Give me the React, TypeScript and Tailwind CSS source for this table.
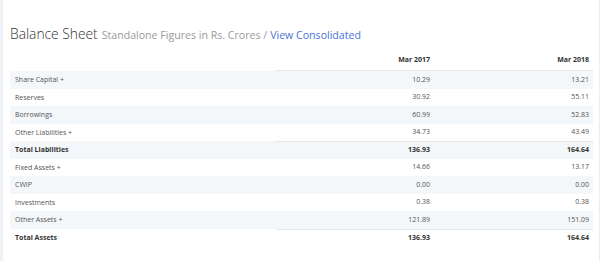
import React from "react";

type Row = { label: string; a: string; b: string; bold?: boolean; topBorder?: boolean };

const rows: Row[] = [
  { label: "Share Capital +", a: "10.29", b: "13.21" },
  { label: "Reserves", a: "30.92", b: "55.11" },
  { label: "Borrowings", a: "60.99", b: "52.83" },
  { label: "Other Liabilities +", a: "34.73", b: "43.49" },
  { label: "Total Liabilities", a: "136.93", b: "164.64", bold: true, topBorder: true },
  { label: "Fixed Assets +", a: "14.66", b: "13.17" },
  { label: "CWIP", a: "0.00", b: "0.00" },
  { label: "Investments", a: "0.38", b: "0.38" },
  { label: "Other Assets +", a: "121.89", b: "151.09" },
  { label: "Total Assets", a: "136.93", b: "164.64", bold: true, topBorder: true },
];

export default function App() {
  return (
    <div
      className="w-[602px] h-[261px] flex bg-white overflow-hidden"
      style={{ fontFamily: '"Open Sans", "Liberation Sans", sans-serif' }}
    >
      <div className="w-[3px] bg-[#eef1f5]" />
      <div className="flex-1 pl-[7px] pr-[6px] pt-[24px] border-r border-[#eceef1]">
        <div className="h-[20px] flex items-baseline whitespace-nowrap">
          <span className="text-[13.8px] font-light text-[#333]">Balance Sheet</span>
          <span className="ml-[4px] text-[10.6px] text-[#9a9a9a]">Standalone Figures in Rs. Crores /</span>
          <span className="ml-[3px] text-[10.6px] text-[#4a73d6]">View Consolidated</span>
        </div>
        <div className="mt-[6px] w-[583px]">
          <div className="flex h-[21px] items-end text-[7px] font-bold text-[#333]">
            <div className="w-[265px]" />
            <div className="w-[159px] h-full flex items-end justify-end pr-[4px] pb-[5px] border-b border-[#e6e8eb]">
              Mar 2017
            </div>
            <div className="w-[159px] h-full flex items-end justify-end pr-[4px] pb-[5px] border-b border-[#e6e8eb]">
              Mar 2018
            </div>
          </div>
          {rows.map((r, i) => (
            <div
              key={r.label}
              className={
                "flex h-[17.5px] items-center text-[7px] " +
                (i % 2 === 0 ? "bg-[#f4f7fa] " : "bg-white ") +
                (r.bold ? "font-bold text-[#333]" : "text-[#555]")
              }
            >
              <div className="w-[265px] pl-[5px] leading-none">{r.label}</div>
              <div
                className={
                  "w-[159px] h-full flex items-center justify-end pr-[4px] " +
                  (r.topBorder ? "border-t border-[#e6e8eb]" : "")
                }
              >
                {r.a}
              </div>
              <div
                className={
                  "w-[159px] h-full flex items-center justify-end pr-[4px] " +
                  (r.topBorder ? "border-t border-[#e6e8eb]" : "")
                }
              >
                {r.b}
              </div>
            </div>
          ))}
        </div>
      </div>
      <div className="w-[2px]" />
    </div>
  );
}
